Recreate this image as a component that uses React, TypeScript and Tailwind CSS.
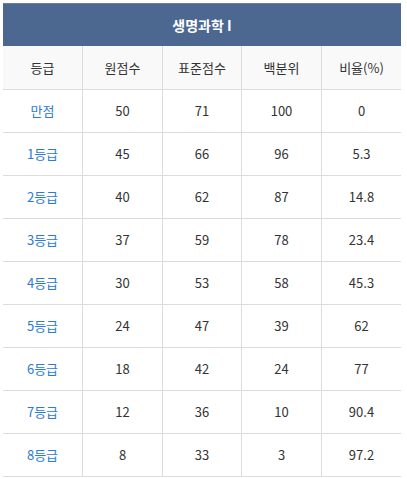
const headers = ['등급', '원점수', '표준점수', '백분위', '비율(%)'];

const rows = [
  ['만점', '50', '71', '100', '0'],
  ['1등급', '45', '66', '96', '5.3'],
  ['2등급', '40', '62', '87', '14.8'],
  ['3등급', '37', '59', '78', '23.4'],
  ['4등급', '30', '53', '58', '45.3'],
  ['5등급', '24', '47', '39', '62'],
  ['6등급', '18', '42', '24', '77'],
  ['7등급', '12', '36', '10', '90.4'],
  ['8등급', '8', '33', '3', '97.2'],
];

const widths = ['w-[79px]', 'w-[80px] border-l', 'w-[79px] border-l', 'w-[80px] border-l', 'w-[80px] border-l'];

export default function App() {
  return (
    <div
      className="bg-white w-[407px] h-[479px] pt-[3px] pl-[3px] text-[13px] text-[#333]"
      style={{ fontFamily: '"Noto Sans CJK KR", "Noto Sans", sans-serif' }}
    >
      <div className="w-[398px]">
        <div className="h-[43px] border-t border-[#6b7f9c] bg-[#4c6891] flex items-center justify-center text-white font-bold text-[14px]">
          생명과학 I
        </div>
        <div className="flex h-[44px] bg-[#f9f9f9] border-b border-[#dcdcdc]">
          {headers.map((h, i) => (
            <div key={i} className={`${widths[i]} border-[#dcdcdc] flex items-center justify-center`}>
              {h}
            </div>
          ))}
        </div>
        {rows.map((r, ri) => (
          <div key={ri} className="flex h-[43px] border-b border-[#dcdcdc]">
            {r.map((c, ci) => (
              <div
                key={ci}
                className={`${widths[ci]} border-[#dcdcdc] flex items-center justify-center ${ci === 0 ? 'text-[#2a7bd5]' : ''}`}
              >
                {c}
              </div>
            ))}
          </div>
        ))}
      </div>
    </div>
  );
}
